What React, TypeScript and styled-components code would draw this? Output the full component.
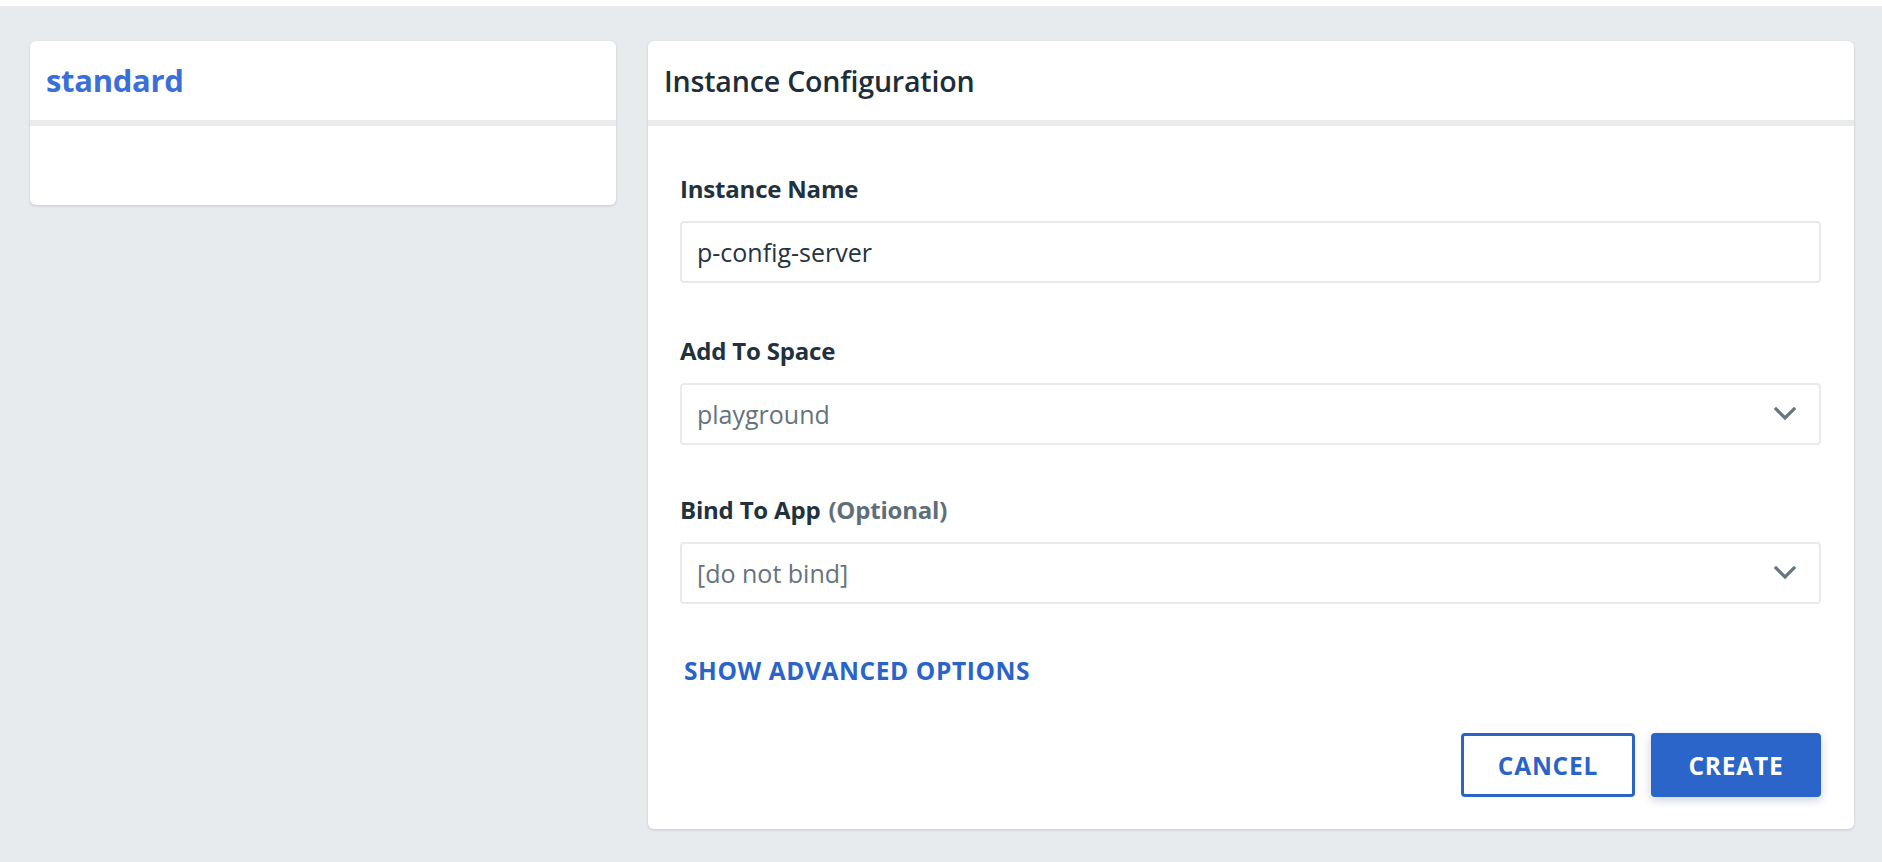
import React from "react";
import styled, { createGlobalStyle } from "styled-components";

const GlobalStyle = createGlobalStyle`
  html, body { margin: 0; padding: 0; }
  body {
    background: #e8ebee;
    font-family: "Open Sans", "Noto Sans", sans-serif;
    -webkit-font-smoothing: antialiased;
  }
  * { box-sizing: border-box; }
`;

const Page = styled.div`
  min-height: 100vh;
  display: flex;
  flex-direction: column;
`;

const TopStrip = styled.div`
  height: 6px;
  background: #ffffff;
`;

const Content = styled.div`
  display: grid;
  grid-template-columns: 586px 1fr;
  gap: 32px;
  align-items: start;
  padding: 35px 28px 32px 30px;
`;

const Card = styled.section`
  background: #ffffff;
  border-radius: 6px;
  box-shadow: 0 1px 3px rgba(30, 45, 60, 0.18);
  overflow: hidden;
`;

const CardHeader = styled.header`
  height: 85px;
  display: flex;
  align-items: center;
  padding: 0 16px;
  border-bottom: 6px solid #e9ebed;
`;

const PlanTitle = styled.h2`
  margin: 0 0 2px;
  font-size: 31px;
  font-weight: 700;
  color: #3a6ed9;
  letter-spacing: -0.3px;
`;

const PanelTitle = styled.h2`
  margin: 0;
  font-size: 28.6px;
  font-weight: 600;
  color: #1e2d3a;
  letter-spacing: -0.2px;
`;

const EmptyBody = styled.div`
  height: 79px;
`;

const FormBody = styled.div`
  display: flex;
  flex-direction: column;
  padding: 50px 33px 32px 32px;
`;

const Field = styled.div`
  display: flex;
  flex-direction: column;
  gap: 19px;
  margin-bottom: 52px;

  &:first-child {
    margin-bottom: 55px;
  }
`;

const Label = styled.label`
  font-size: 24px;
  font-weight: 700;
  color: #22313e;
  line-height: 26px;
  letter-spacing: -0.2px;
`;

const Optional = styled.span`
  color: #5f6e79;
  margin-left: 8px;
`;

const TextInput = styled.input`
  height: 62px;
  width: 100%;
  border: 2px solid #e8eaec;
  border-radius: 4px;
  padding: 0 15px;
  font-family: inherit;
  font-size: 25px;
  color: #25333f;
  background: #ffffff;
  outline: none;
`;

const SelectBox = styled.div`
  height: 62px;
  display: flex;
  align-items: center;
  justify-content: space-between;
  border: 2px solid #e8eaec;
  border-radius: 4px;
  padding: 0 23px 0 15px;
  font-size: 25px;
  color: #65737d;
  background: #ffffff;
`;

const AdvancedLink = styled.button`
  align-self: flex-start;
  background: none;
  border: none;
  padding: 0 4px;
  margin: -1px 0 0;
  font-family: inherit;
  font-size: 24.5px;
  font-weight: 700;
  letter-spacing: 0.6px;
  color: #2b64c8;
  text-transform: uppercase;
  line-height: 32px;
  cursor: pointer;
`;

const Actions = styled.div`
  display: flex;
  justify-content: flex-end;
  gap: 16px;
  margin-top: 46px;
`;

const Button = styled.button<{ $primary?: boolean }>`
  height: 64px;
  min-width: ${(p) => (p.$primary ? "170px" : "174px")};
  border-radius: 4px;
  font-family: inherit;
  font-size: 24.5px;
  font-weight: 700;
  letter-spacing: 0.8px;
  text-transform: uppercase;
  cursor: pointer;
  border: 3px solid #2b64c8;
  color: ${(p) => (p.$primary ? "#ffffff" : "#2b64c8")};
  background: ${(p) => (p.$primary ? "#2b65c9" : "#ffffff")};
  box-shadow: ${(p) => (p.$primary ? "0 3px 10px rgba(20, 40, 80, 0.22)" : "none")};
`;

const Chevron = () => (
  <svg width="22" height="14" viewBox="0 0 22 14" fill="none">
    <path d="M2 2 L11 11 L20 2" stroke="#68767f" strokeWidth="3.2" strokeLinecap="square" />
  </svg>
);

export default function App() {
  return (
    <>
      <GlobalStyle />
      <Page>
        <TopStrip />
        <Content>
          <Card>
            <CardHeader>
              <PlanTitle>standard</PlanTitle>
            </CardHeader>
            <EmptyBody />
          </Card>
          <Card>
            <CardHeader>
              <PanelTitle>Instance Configuration</PanelTitle>
            </CardHeader>
            <FormBody>
              <Field>
                <Label>Instance Name</Label>
                <TextInput defaultValue="p-config-server" />
              </Field>
              <Field>
                <Label>Add To Space</Label>
                <SelectBox>
                  <span>playground</span>
                  <Chevron />
                </SelectBox>
              </Field>
              <Field>
                <Label>
                  Bind To App<Optional>(Optional)</Optional>
                </Label>
                <SelectBox>
                  <span>[do not bind]</span>
                  <Chevron />
                </SelectBox>
              </Field>
              <AdvancedLink>Show Advanced Options</AdvancedLink>
              <Actions>
                <Button>Cancel</Button>
                <Button $primary>Create</Button>
              </Actions>
            </FormBody>
          </Card>
        </Content>
      </Page>
    </>
  );
}
